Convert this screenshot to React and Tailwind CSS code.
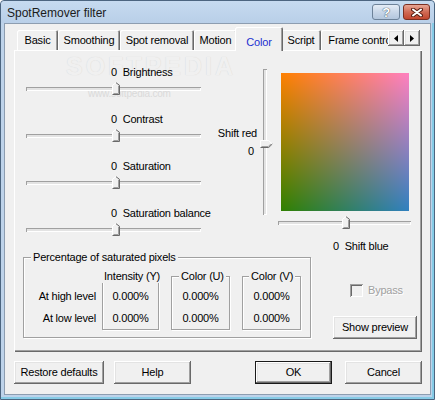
import React from "react";

const tabs = [
  { label: "Basic", w: 41 },
  { label: "Smoothing", w: 62 },
  { label: "Spot removal", w: 74 },
  { label: "Motion", w: 43 },
  { label: "Color", w: 44, active: true },
  { label: "Script", w: 40 },
  { label: "Frame control", w: 80 },
];

const raised =
  "bg-[#f0f0f0] shadow-[inset_-1px_-1px_0_#696969,inset_1px_1px_0_#ffffff,inset_-2px_-2px_0_#a0a0a0,inset_2px_2px_0_#e3e3e3]";

function ThumbUp() {
  return (
    <svg width="8" height="13" viewBox="0 0 8 13">
      <path d="M0 3L4 0L8 3V13H0Z" fill="#f0f0f0" />
      <path d="M0.5 12.5V3.3L4 0.7" stroke="#ffffff" fill="none" />
      <path d="M4 0.7L7.5 3.3V12.5H0.5" stroke="#696969" fill="none" />
      <path d="M6.5 3.8V11.5H1.5" stroke="#a0a0a0" fill="none" />
    </svg>
  );
}

function ThumbRight() {
  return (
    <svg width="13" height="8" viewBox="0 0 13 8">
      <path d="M0 0H9L13 4L9 8H0Z" fill="#f0f0f0" />
      <path d="M0.5 7.5V0.5H8.7L12.3 4" stroke="#ffffff" fill="none" />
      <path d="M12.3 4L8.7 7.5H0.5" stroke="#696969" fill="none" />
      <path d="M1.5 6.5H8.3L10.8 4" stroke="#a0a0a0" fill="none" />
    </svg>
  );
}

// sunken channel of a trackbar
const channel =
  "bg-[#e3e3e3] shadow-[inset_1px_1px_0_#a0a0a0,inset_-1px_-1px_0_#ffffff]";

function SliderGroup({ name, last }) {
  return (
    <div className={last ? "" : "mb-[17px]"}>
      <div className="relative z-10 h-[13px] leading-[13px] pl-[85px] whitespace-nowrap">
        0&nbsp; {name}
      </div>
      <div className="relative mt-[3px] h-[14px]">
        <div className={"absolute left-0 right-0 top-[5px] h-[4px] " + channel} />
        <div className="absolute left-[86px] top-0">
          <ThumbUp />
        </div>
      </div>
    </div>
  );
}

function SubBox({ title, w, titleLeft }) {
  return (
    <div
      className={
        "relative h-[54px] border border-[#a0a0a0] shadow-[inset_1px_1px_0_#ffffff,1px_1px_0_#ffffff] " + w
      }
    >
      <div
        className={
          "absolute -top-[7px] bg-[#f0f0f0] px-[2px] leading-[13px] whitespace-nowrap " + titleLeft
        }
      >
        {title}
      </div>
      <div className="flex flex-col items-center pt-[13px] gap-[9px] leading-[13px]">
        <div>0.000%</div>
        <div>0.000%</div>
      </div>
    </div>
  );
}

function Arrow({ dir }) {
  return (
    <div className={"w-[16px] h-[16px] flex items-center justify-center " + raised}>
      <svg width="4" height="7" viewBox="0 0 4 7">
        {dir === "left" ? <path d="M4 0V7L0 3.5Z" fill="#000" /> : <path d="M0 0V7L4 3.5Z" fill="#000" />}
      </svg>
    </div>
  );
}

export default function App() {
  return (
    <div className="relative w-[435px] h-[400px] flex flex-col bg-[#bed3ea] border border-[#4c6580] rounded-t-[4px] shadow-[inset_-2px_-2px_0_#86cbe6] font-['Liberation_Sans',Arial,sans-serif] text-[11px] tracking-[-0.2px] text-black">
      {/* title bar */}
      <div className="h-[22px] flex pl-[6px] pr-[4px] bg-[linear-gradient(to_bottom,#c6daf0,#b9cfe8)] rounded-t-[4px]">
        <div className="self-center pt-[1px] text-[12px] tracking-normal text-[#1b1b1b]">SpotRemover filter</div>
        <div className="ml-auto flex gap-[3px] pt-[3px]">
          <div className="w-[28px] h-[16px] rounded-[3px] border border-[#6d8299] bg-[linear-gradient(to_bottom,#e4ecf6,#c9d7e8_50%,#b3c6dd)] flex items-center justify-center">
            <span className="font-bold text-[13px] leading-none text-white [text-shadow:0_0_1px_#3b4b5e,0_0_1px_#3b4b5e]">?</span>
          </div>
          <div className="w-[27px] h-[16px] rounded-[3px] border border-[#7a2f22] bg-[linear-gradient(to_bottom,#e8a695,#d06a55_50%,#c2462f)] flex items-center justify-center">
            <svg width="12" height="9" viewBox="0 0 12 9">
              <path d="M2 1.5L10 7.5M10 1.5L2 7.5" stroke="#5a1d12" strokeWidth="4" strokeLinecap="round" />
              <path d="M2 1.5L10 7.5M10 1.5L2 7.5" stroke="#ffffff" strokeWidth="2" strokeLinecap="round" />
            </svg>
          </div>
        </div>
      </div>

      {/* client area */}
      <div className="flex-1 mx-[3px] mb-[4px] bg-[#f0f0f0] border border-[#8d9db0] flex flex-col pl-[9px] pr-[8px]">
        {/* tabs */}
        <div className="mt-[3px] flex relative z-10 -mb-[1px]">
          <div className="ml-[3px] w-[371px] h-[24px] overflow-hidden flex items-end">
            {tabs.map((t) =>
              t.active ? (
                <div
                  key={t.label}
                  className="relative z-10 -mx-[2px] h-[24px] shrink-0 flex justify-center pt-[7px] bg-[#f0f0f0] rounded-t-[2px] shadow-[inset_1px_1px_0_#ffffff,inset_-1px_0_0_#696969,inset_-2px_0_0_#a0a0a0] text-[#1d2fd1]"
                  style={{ width: t.w + 4 }}
                >
                  {t.label}
                </div>
              ) : (
                <div
                  key={t.label}
                  className="mb-[1px] h-[20px] shrink-0 flex items-center justify-center whitespace-nowrap bg-[#f0f0f0] rounded-t-[2px] shadow-[inset_1px_1px_0_#ffffff,inset_-1px_0_0_#696969,inset_-2px_0_0_#a0a0a0]"
                  style={{ width: t.w }}
                >
                  {t.label}
                </div>
              )
            )}
          </div>
          <div className="flex mt-[3px] self-start">
            <Arrow dir="left" />
            <Arrow dir="right" />
          </div>
        </div>

        {/* tab page */}
        <div className="relative h-[302px] flex flex-col bg-[#f0f0f0] shadow-[inset_1px_1px_0_#ffffff,inset_-1px_-1px_0_#696969,inset_-2px_-2px_0_#a0a0a0]">
          {/* faint watermark */}
          <div className="absolute left-[52px] top-[3px] text-[25px] font-bold tracking-[3px] text-[#f0f0f0] [text-shadow:0_0_1px_#d4d4d4] leading-[26px] pointer-events-none">
            SOFTPEDIA
          </div>
          <div className="absolute left-[74px] top-[38px] text-[10px] leading-[11px] text-[#dadada] pointer-events-none">www.softpedia.com</div>

          <div className="relative flex pt-[16px] pl-[12px]">
            <div className="w-[175px] flex flex-col">
              <SliderGroup name="Brightness" />
              <SliderGroup name="Contrast" />
              <SliderGroup name="Saturation" />
              <SliderGroup name="Saturation balance" last />
            </div>

            <div className="ml-[12px] mt-[3px] flex">
              <div className="w-[44px] h-[146px] flex flex-col justify-center items-end gap-[5px] leading-[13px]">
                <div className="whitespace-nowrap">Shift red</div>
                <div className="mr-[3px]">0</div>
              </div>
              <div className="relative w-[14px] h-[146px]">
                <div className={"absolute left-[6px] top-0 bottom-0 w-[4px] " + channel} />
                <div className="absolute left-[3px] top-[71px] flex">
                  <ThumbRight />
                </div>
              </div>
              <div className="ml-[7px] w-[133px] flex flex-col">
                <div className="ml-[3px] mt-[4px] w-[128px] h-[138px] bg-[linear-gradient(to_bottom,#ff0000,#300000),linear-gradient(to_right,#008000,#0080c0)] bg-blend-lighten" />
                <div className="relative mt-[5px] h-[14px]">
                  <div className={"absolute left-0 right-0 top-[5px] h-[4px] " + channel} />
                  <div className="absolute left-[64px] top-0">
                    <ThumbUp />
                  </div>
                </div>
                <div className="mt-[10px] pl-[55px] leading-[13px] whitespace-nowrap">0&nbsp; Shift blue</div>
              </div>
            </div>
          </div>

          <div className="flex mt-[4px] pl-[9px]">
            <div className="relative w-[288px] h-[81px] border border-[#a0a0a0] shadow-[inset_1px_1px_0_#ffffff,1px_1px_0_#ffffff]">
              <div className="absolute -top-[7px] left-[7px] px-[2px] bg-[#f0f0f0] leading-[13px] whitespace-nowrap">
                Percentage of saturated pixels
              </div>
              <div className="flex pt-[18px]">
                <div className="w-[72px] flex flex-col items-end pt-[14px] gap-[9px] leading-[13px] whitespace-nowrap">
                  <div>At high level</div>
                  <div>At low level</div>
                </div>
                <div className="ml-[6px] flex gap-[12px]">
                  <SubBox title="Intensity (Y)" w="w-[57px]" titleLeft="-left-[1px]" />
                  <SubBox title="Color (U)" w="w-[59px]" titleLeft="left-[7px]" />
                  <SubBox title="Color (V)" w="w-[59px]" titleLeft="left-[6px]" />
                </div>
              </div>
            </div>

            <div className="ml-auto mr-[5px] w-[84px] flex flex-col">
              <div className="mt-[27px] pl-[17px] flex items-center gap-[5px]">
                <div className="w-[13px] h-[13px] bg-[#f0f0f0] shadow-[inset_1px_1px_0_#a0a0a0,inset_-1px_-1px_0_#ffffff,inset_2px_2px_0_#696969]" />
                <span className="text-[#a0a0a0] [text-shadow:1px_1px_0_#ffffff] leading-[13px]">Bypass</span>
              </div>
              <div className={"mt-[19px] h-[23px] flex items-center justify-center " + raised}>Show preview</div>
            </div>
          </div>
        </div>

        {/* dialog buttons */}
        <div className="mt-[9px] flex">
          <div className={"w-[90px] h-[23px] flex items-center justify-center " + raised}>Restore defaults</div>
          <div className={"ml-[10px] w-[77px] h-[23px] flex items-center justify-center " + raised}>Help</div>
          <div className={"ml-auto w-[77px] h-[23px] flex items-center justify-center border border-[#1a1a1a] " + raised}>OK</div>
          <div className={"ml-[13px] w-[77px] h-[23px] flex items-center justify-center " + raised}>Cancel</div>
        </div>
      </div>
    </div>
  );
}
